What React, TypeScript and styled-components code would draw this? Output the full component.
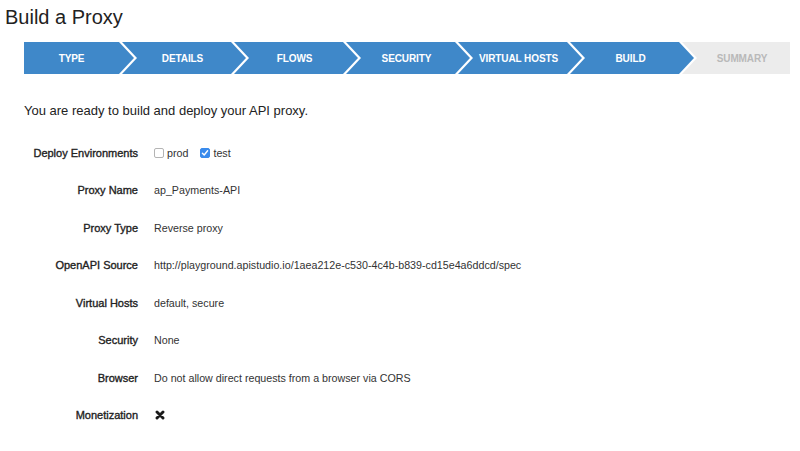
import React from "react";
import styled, { createGlobalStyle } from "styled-components";

const Global = createGlobalStyle`
  html, body { margin: 0; padding: 0; background: #fff; }
  body { font-family: "Liberation Sans", Arial, Helvetica, sans-serif; color: #222; }
`;

const Page = styled.div`
  width: 800px;
  height: 451px;
  overflow: hidden;
  box-sizing: border-box;
  padding-top: 6px;
`;

const Title = styled.h1`
  margin: 0 0 0 5px;
  font-size: 20px;
  line-height: 23px;
  font-weight: 400;
  color: #222;
`;

const Steps = styled.ol`
  list-style: none;
  margin: 13px 0 0 24px;
  padding: 0;
  display: flex;
  height: 32px;
  width: 766px;
`;

type StepProps = { $first?: boolean; $last?: boolean; $done?: boolean };

const clipFor = (p: StepProps) => {
  if (p.$first) return "polygon(0 0, calc(100% - 15px) 0, 100% 50%, calc(100% - 15px) 100%, 0 100%)";
  if (p.$last) return "polygon(0 0, 100% 0, 100% 100%, 0 100%, 15px 50%)";
  return "polygon(0 0, calc(100% - 15px) 0, 100% 50%, calc(100% - 15px) 100%, 0 100%, 15px 50%)";
};

const Step = styled.li<StepProps>`
  flex: none;
  box-sizing: border-box;
  height: 32px;
  width: ${(p) => (p.$first ? 110 : p.$last ? 108 : 124)}px;
  margin-left: ${(p) => (p.$first ? 0 : -12)}px;
  padding-left: ${(p) => (p.$first ? 0 : 12)}px;
  padding-right: ${(p) => (p.$last ? 0 : 15)}px;
  display: flex;
  align-items: center;
  justify-content: center;
  background: ${(p) => (p.$done ? "#3f88c9" : "#ececec")};
  color: ${(p) => (p.$done ? "#ffffff" : "#b9b9b9")};
  font-size: 10px;
  font-weight: 700;
  letter-spacing: -0.1px;
  text-transform: uppercase;
  white-space: nowrap;
  clip-path: ${clipFor};
`;

const Intro = styled.p`
  margin: 29px 0 0 24px;
  font-size: 13px;
  line-height: 16px;
  color: #222;
`;

const Details = styled.dl`
  margin: 27px 0 0 24px;
  display: grid;
  grid-template-columns: 114px auto;
  grid-auto-rows: 14px;
  column-gap: 16px;
  row-gap: 23.45px;
  align-items: center;
`;

const Label = styled.dt`
  margin: 0;
  text-align: right;
  font-size: 11px;
  line-height: 14px;
  font-weight: 400;
  color: #222;
  -webkit-text-stroke: 0.35px #222;
  white-space: nowrap;
`;

const Value = styled.dd`
  margin: 0;
  font-size: 10.7px;
  line-height: 14px;
  color: #333;
  display: flex;
  align-items: center;
  white-space: nowrap;
`;

const Option = styled.label`
  display: inline-flex;
  align-items: center;
  gap: 3px;
  margin-right: 12px;
`;

const Box = styled.span<{ $checked?: boolean }>`
  box-sizing: border-box;
  width: 10px;
  height: 10px;
  border-radius: 2px;
  border: 1px solid ${(p) => (p.$checked ? "#3a8bec" : "#b4b4b4")};
  background: ${(p) => (p.$checked ? "#3a8bec" : "#fff")};
  display: inline-flex;
  align-items: center;
  justify-content: center;
`;

const Check = () => (
  <svg width="8" height="8" viewBox="0 0 8 8">
    <path d="M1.4 4.2 L3.2 6 L6.6 1.8" fill="none" stroke="#fff" strokeWidth="1.4" strokeLinecap="round" strokeLinejoin="round" />
  </svg>
);

const Cross = () => (
  <svg width="10" height="10" viewBox="0 0 10 10" style={{ marginLeft: 1 }}>
    <path d="M2 2 L8 8 M8 2 L2 8" stroke="#1a1a1a" strokeWidth="2.9" strokeLinecap="round" />
  </svg>
);

const steps = ["Type", "Details", "Flows", "Security", "Virtual Hosts", "Build", "Summary"];

export default function App() {
  return (
    <>
      <Global />
      <Page>
        <Title>Build a Proxy</Title>
        <Steps>
          {steps.map((s, i) => (
            <Step key={s} $first={i === 0} $last={i === steps.length - 1} $done={i < steps.length - 1}>
              {s}
            </Step>
          ))}
        </Steps>
        <Intro>You are ready to build and deploy your API proxy.</Intro>
        <Details>
          <Label>Deploy Environments</Label>
          <Value>
            <Option>
              <Box />
              prod
            </Option>
            <Option>
              <Box $checked>
                <Check />
              </Box>
              test
            </Option>
          </Value>
          <Label>Proxy Name</Label>
          <Value>ap_Payments-API</Value>
          <Label>Proxy Type</Label>
          <Value>Reverse proxy</Value>
          <Label>OpenAPI Source</Label>
          <Value>http://playground.apistudio.io/1aea212e-c530-4c4b-b839-cd15e4a6ddcd/spec</Value>
          <Label>Virtual Hosts</Label>
          <Value>default, secure</Value>
          <Label>Security</Label>
          <Value>None</Value>
          <Label>Browser</Label>
          <Value>Do not allow direct requests from a browser via CORS</Value>
          <Label>Monetization</Label>
          <Value>
            <Cross />
          </Value>
        </Details>
      </Page>
    </>
  );
}
